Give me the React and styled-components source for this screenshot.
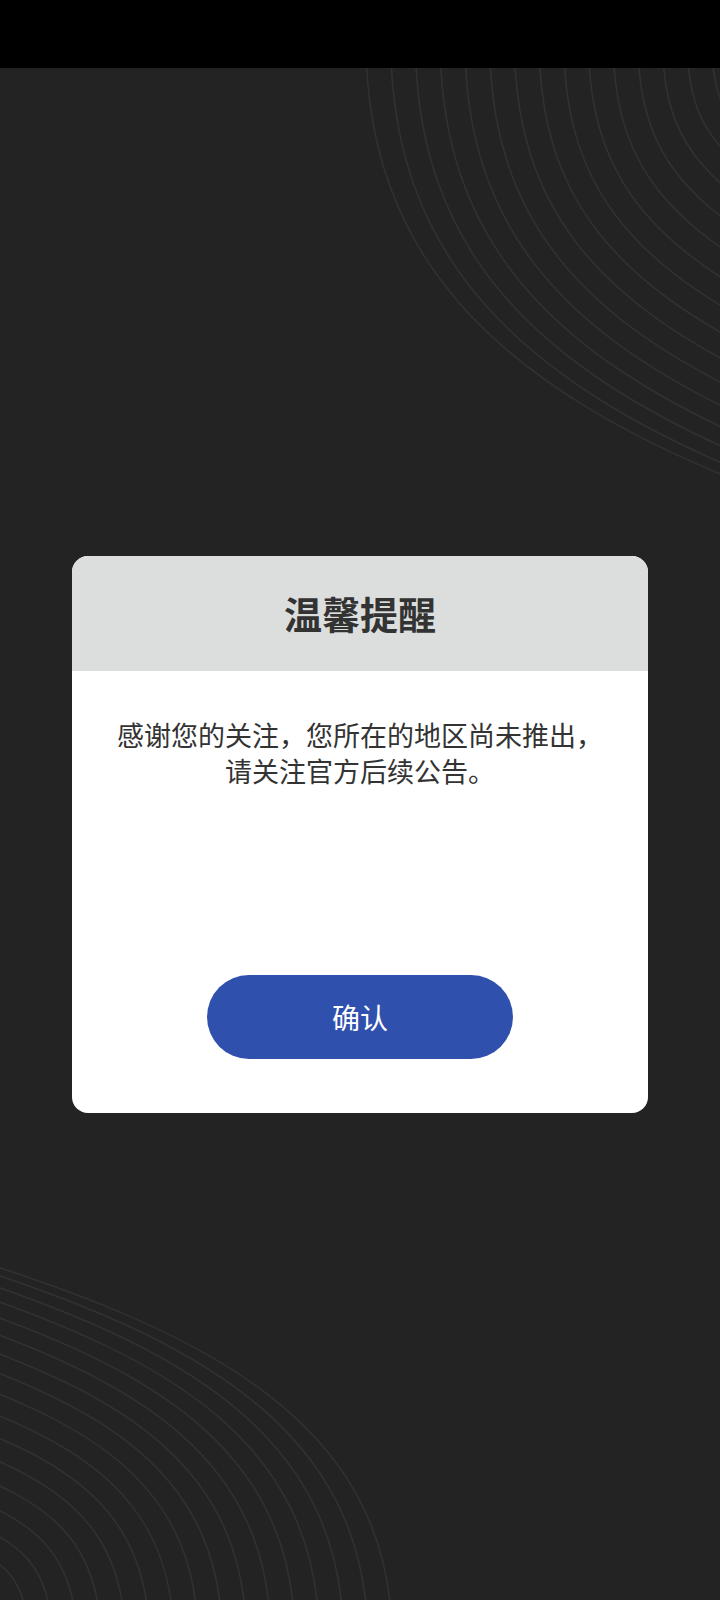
import React from 'react';
import styled, { createGlobalStyle } from 'styled-components';

const GlobalStyle = createGlobalStyle`
    html, body {
        margin: 0;
        padding: 0;
        background: #232323;
    }
    body {
        font-family: "Noto Sans CJK SC", "Noto Sans", sans-serif;
    }
`

const Page = styled.div`
    width: 720px;
    height: 1600px;
    display: flex;
    flex-flow: column;
    background: #232323;
    overflow: hidden;
`

const StatusBar = styled.div`
    height: 68px;
    flex-shrink: 0;
    background: #000;
`

const Content = styled.main`
    position: relative;
    flex: 1;
    display: flex;
    justify-content: center;
    align-items: center;
`

const Waves = styled.svg`
    position: absolute;
    inset: 0;
    pointer-events: none;
`

const Dialog = styled.section`
    position: relative;
    width: 576px;
    border-radius: 16px;
    overflow: hidden;
    background: #fff;
    display: flex;
    flex-flow: column;
`

const Header = styled.header`
    height: 115px;
    background: #dcdedd;
    display: flex;
    justify-content: center;
    align-items: center;
`

const Title = styled.h2`
    margin: 0;
    font-size: 38px;
    font-weight: 700;
    color: #333;
    line-height: 1;
`

const Body = styled.div`
    padding: 46px 40px 54px;
    display: flex;
    flex-flow: column;
    align-items: center;
`

const Message = styled.p`
    margin: 0;
    font-size: 27px;
    line-height: 36px;
    color: #333;
    text-align: center;
`

const Line = styled.span`
    display: block;
    height: 36px;
`

const ConfirmButton = styled.button`
    margin-top: 186px;
    width: 306px;
    height: 84px;
    border: none;
    border-radius: 42px;
    background: #3050ad;
    color: #fff;
    font-family: inherit;
    font-size: 28px;
    cursor: pointer;
`

const lerp = (a, b, s) => a + (b - a) * s;

// builds a family of curves between an outer and inner cubic bezier
function curveFamily(outer, inner, count, yEase) {
    const paths = [];
    for (let i = 0; i < count; i++) {
        const s = i / (count - 1);
        const sy = Math.pow(s, yEase);
        const pts = outer.map((p, k) => [
            lerp(p[0], inner[k][0], s).toFixed(1),
            lerp(p[1], inner[k][1], sy).toFixed(1),
        ]);
        paths.push(`M${pts[0]} C${pts[1]} ${pts[2]} ${pts[3]}`);
    }
    return paths;
}

const topRight = curveFamily(
    [[366, 40], [366, 260], [500, 390], [760, 490]],
    [[712, 40], [712, 100], [725, 120], [770, 160]],
    15,
    1.3
);

const bottomLeft = curveFamily(
    [[-40, 1255], [200, 1330], [392, 1420], [392, 1640]],
    [[-40, 1545], [5, 1560], [28, 1580], [28, 1640]],
    16,
    1.35
);

function Background() {
    return (
        <Waves width="720" height="1532" viewBox="0 68 720 1532">
            <g fill="none" stroke="#313131" strokeWidth="1.6">
                {topRight.map((d, i) => <path key={'t' + i} d={d} />)}
                {bottomLeft.map((d, i) => <path key={'b' + i} d={d} />)}
            </g>
        </Waves>
    )
}

export default function App() {
    return (
        <Page>
            <GlobalStyle />
            <StatusBar />
            <Content>
                <Background />
                <Dialog>
                    <Header>
                        <Title>温馨提醒</Title>
                    </Header>
                    <Body>
                        <Message>
                            <Line>感谢您的关注，您所在的地区尚未推出，</Line>
                            <Line>请关注官方后续公告。</Line>
                        </Message>
                        <ConfirmButton>确认</ConfirmButton>
                    </Body>
                </Dialog>
            </Content>
        </Page>
    )
}
